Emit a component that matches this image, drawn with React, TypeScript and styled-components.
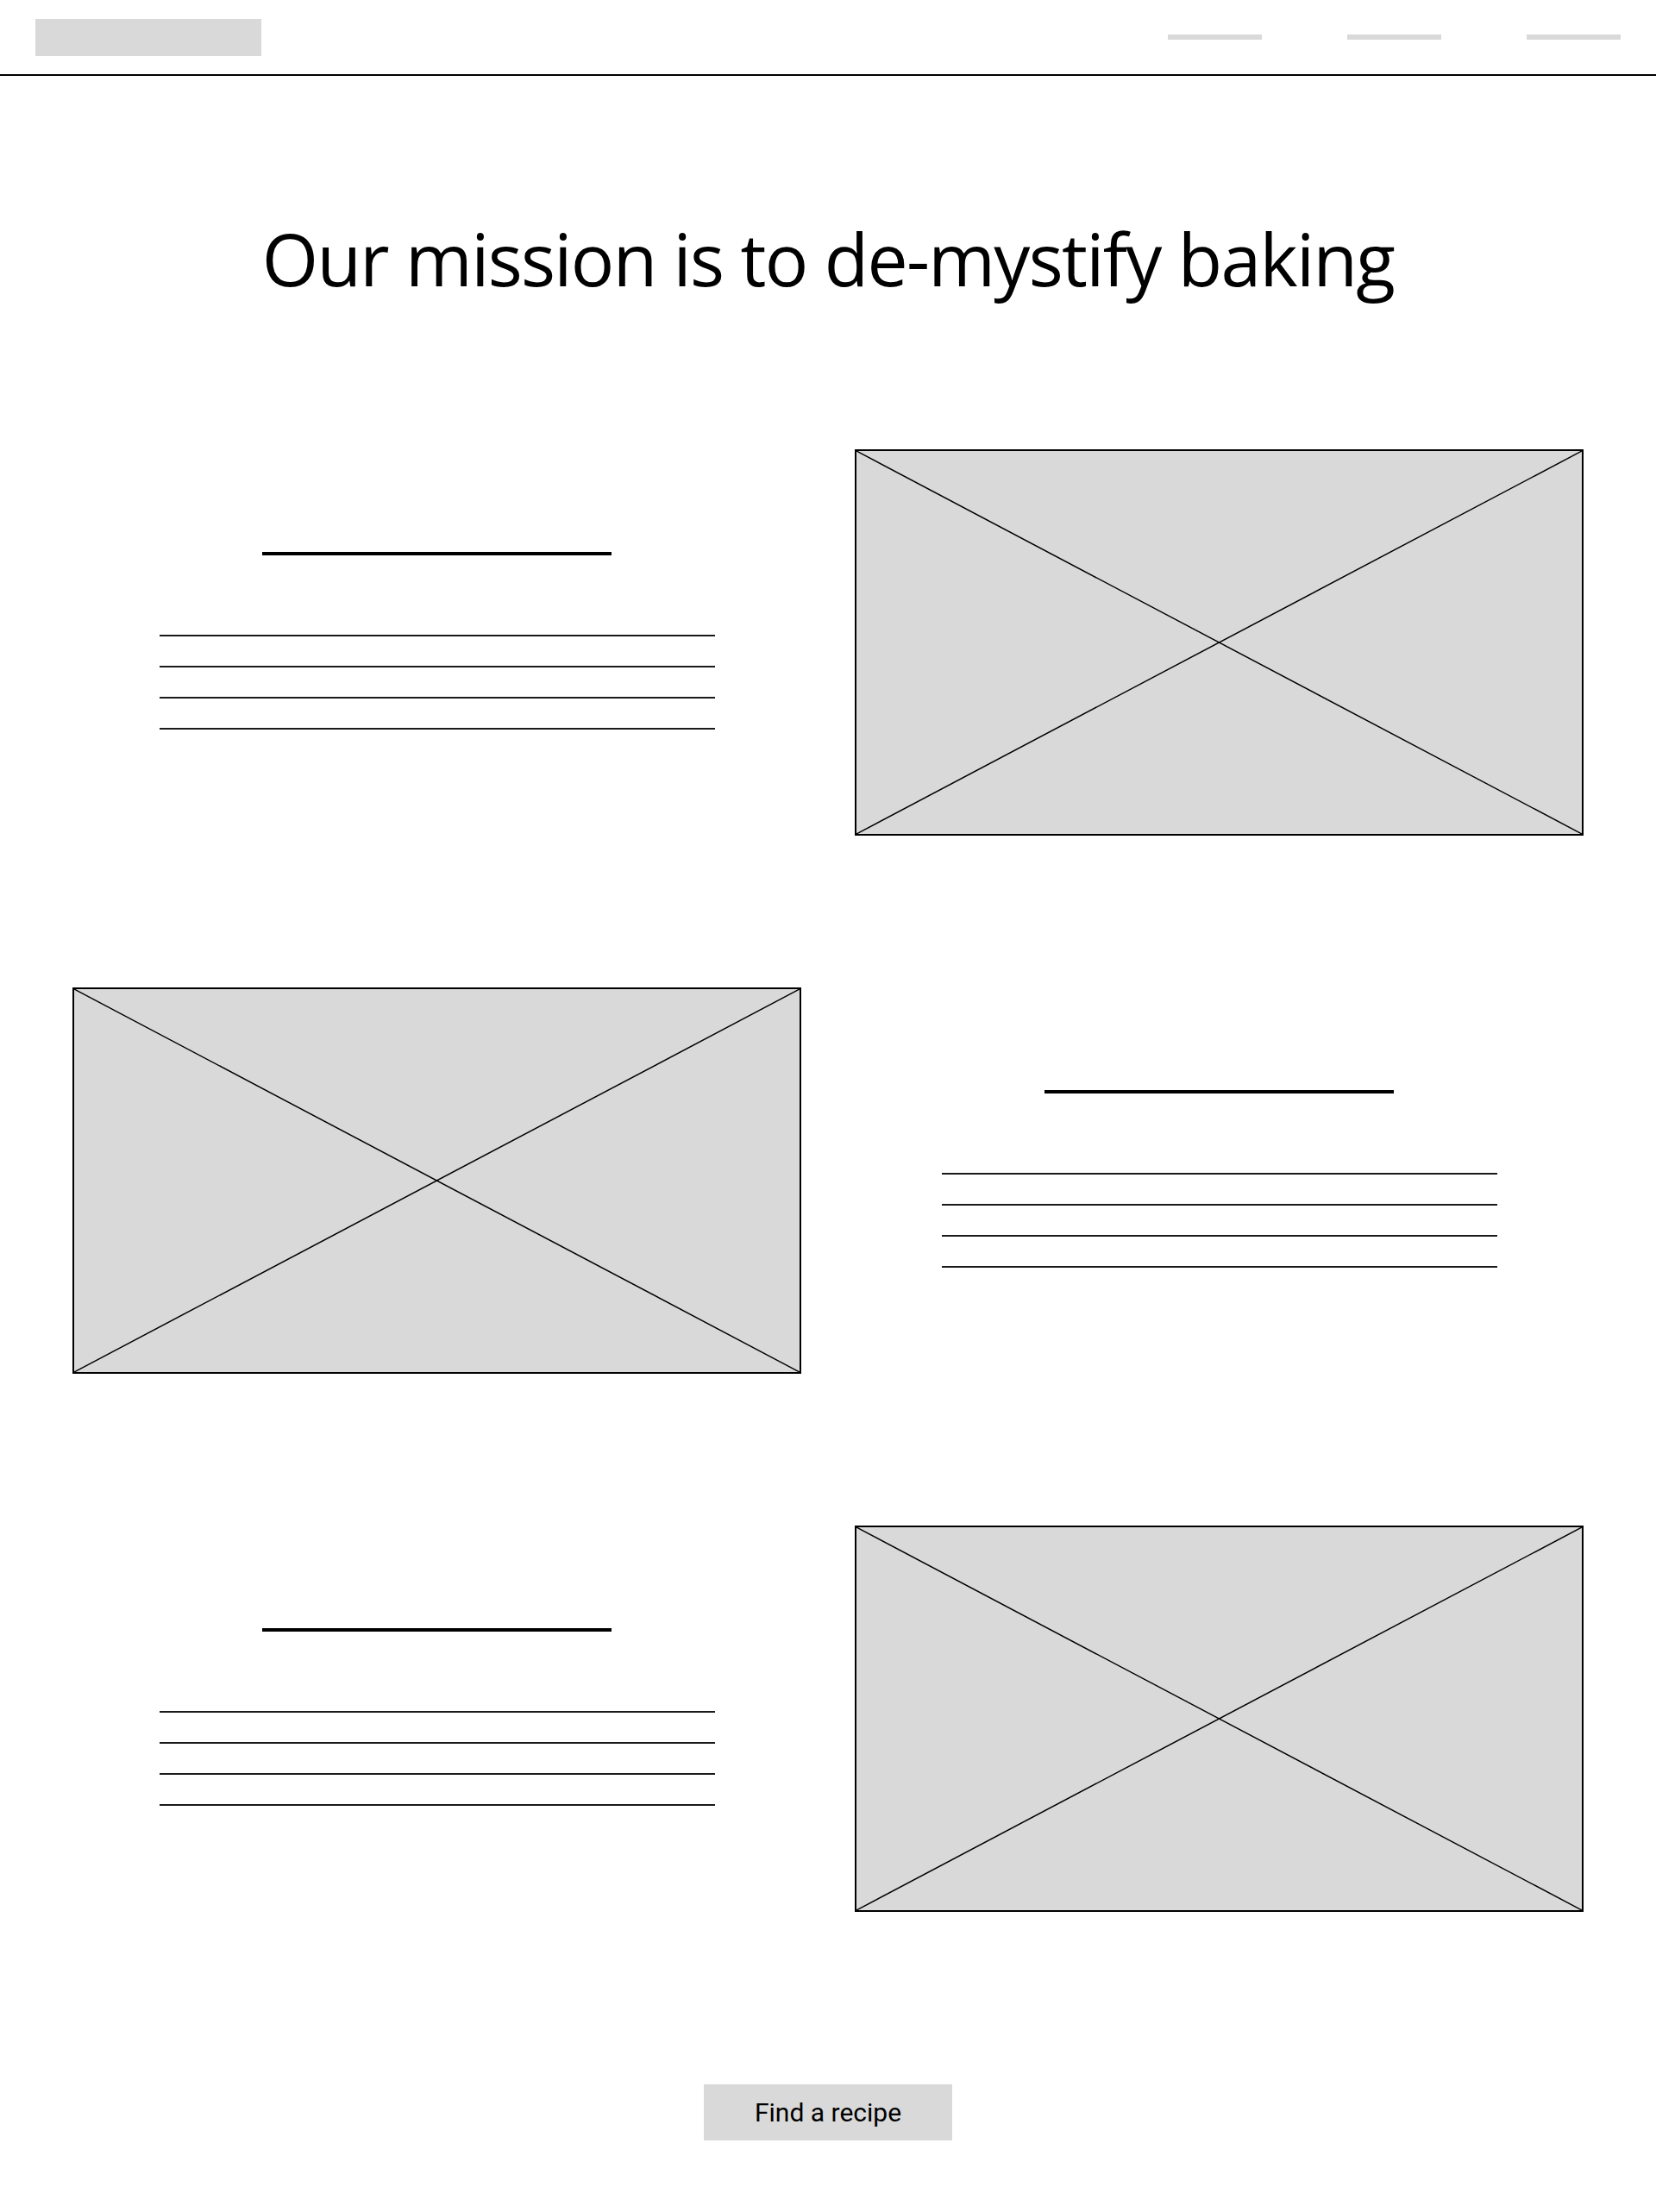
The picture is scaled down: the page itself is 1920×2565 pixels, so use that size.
import styled, { createGlobalStyle } from "styled-components";

const GlobalStyle = createGlobalStyle`
  html, body {
    margin: 0;
    padding: 0;
    background: #fff;
  }
  * {
    box-sizing: border-box;
  }
`;

const Page = styled.div`
  width: 1920px;
  min-height: 2565px;
  display: flex;
  flex-direction: column;
  background: #fff;
`;

const Header = styled.header`
  height: 88px;
  padding: 0 41px;
  display: flex;
  align-items: center;
  justify-content: space-between;
  border-bottom: 2px solid #000;
`;

const Logo = styled.div`
  width: 262px;
  height: 43px;
  background: #d9d9d9;
`;

const Nav = styled.nav`
  display: flex;
  gap: 99px;
`;

const NavItem = styled.div`
  width: 109px;
  height: 6px;
  background: #d9d9d9;
`;

const Title = styled.h1`
  margin: 0;
  padding-top: 170px;
  height: 433px;
  font-family: "Open Sans", "Noto Sans", sans-serif;
  font-weight: 400;
  font-size: 84px;
  line-height: 84px;
  letter-spacing: -1.7px;
  text-align: center;
  color: #000;
`;

const Sections = styled.div`
  padding: 0 84px;
  display: flex;
  flex-direction: column;
  gap: 176px;
`;

const Row = styled.section`
  height: 448px;
  display: grid;
  grid-template-columns: 845px 845px;
  gap: 62px;
`;

const TextBlock = styled.div`
  display: flex;
  flex-direction: column;
  align-items: center;
  justify-content: center;
  padding-bottom: 4px;
`;

const HeadingBar = styled.div`
  width: 405px;
  height: 4px;
  background: #000;
  margin-bottom: 92px;
`;

const Lines = styled.div`
  display: flex;
  flex-direction: column;
  gap: 34px;
`;

const Line = styled.div`
  width: 644px;
  height: 2px;
  background: #1a1a1a;
`;

const ImageBox = styled.div`
  height: 448px;
  border: 2px solid #000;
  background: #d9d9d9;

  svg {
    display: block;
    width: 100%;
    height: 100%;
  }
`;

const Footer = styled.div`
  display: flex;
  justify-content: center;
  padding: 200px 0 82px;
`;

const Button = styled.button`
  width: 288px;
  height: 65px;
  border: none;
  background: #d9d9d9;
  font-family: Roboto, "Liberation Sans", sans-serif;
  font-size: 30px;
  color: #000;
  cursor: pointer;
`;

function Placeholder() {
  return (
    <ImageBox>
      <svg viewBox="0 0 100 100" preserveAspectRatio="none">
        <line x1="0" y1="0" x2="100" y2="100" stroke="#000" strokeWidth="1.5" vectorEffect="non-scaling-stroke" />
        <line x1="100" y1="0" x2="0" y2="100" stroke="#000" strokeWidth="1.5" vectorEffect="non-scaling-stroke" />
      </svg>
    </ImageBox>
  );
}

function Copy() {
  return (
    <TextBlock>
      <HeadingBar />
      <Lines>
        {[0, 1, 2, 3].map((i) => (
          <Line key={i} />
        ))}
      </Lines>
    </TextBlock>
  );
}

const rows: ("text" | "image")[][] = [
  ["text", "image"],
  ["image", "text"],
  ["text", "image"],
];

export default function App() {
  return (
    <>
      <GlobalStyle />
      <Page>
        <Header>
          <Logo />
          <Nav>
            <NavItem />
            <NavItem />
            <NavItem />
          </Nav>
        </Header>
        <Title>Our mission is to de-mystify baking</Title>
        <Sections>
          {rows.map((row, i) => (
            <Row key={i}>
              {row.map((cell, j) =>
                cell === "text" ? <Copy key={j} /> : <Placeholder key={j} />
              )}
            </Row>
          ))}
        </Sections>
        <Footer>
          <Button>Find a recipe</Button>
        </Footer>
      </Page>
    </>
  );
}
